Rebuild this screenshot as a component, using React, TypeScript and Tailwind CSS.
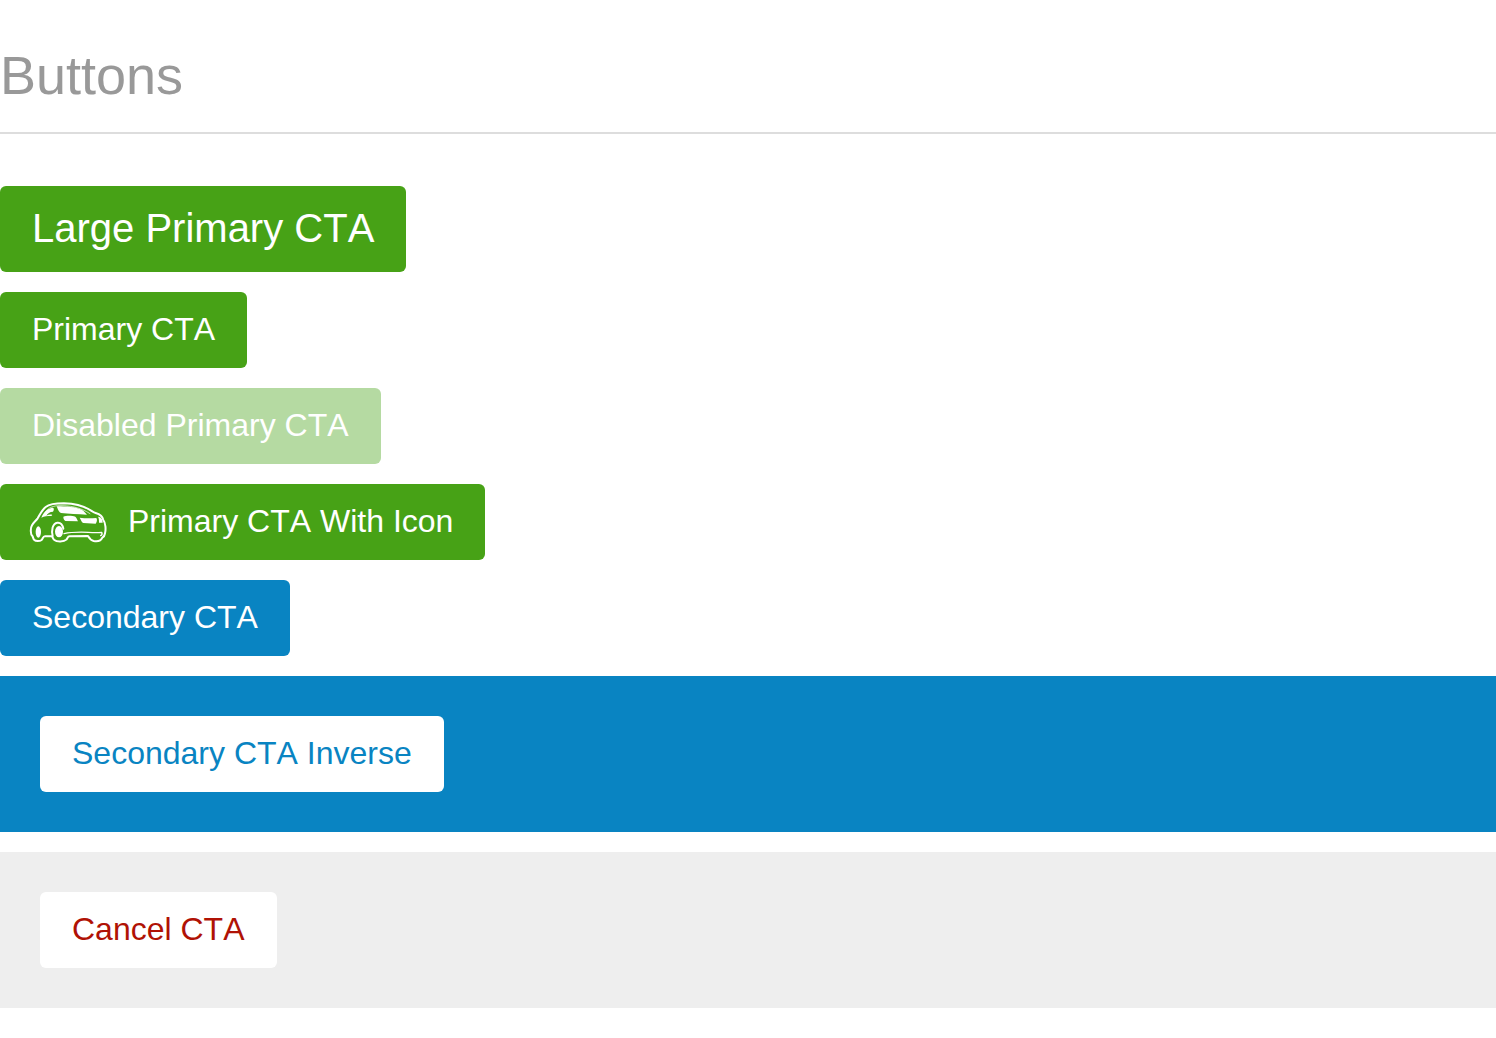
import type { ButtonHTMLAttributes } from "react";

const base =
  "inline-flex items-center rounded-md pt-[18px] pb-5 text-[32px] leading-[38px] whitespace-nowrap";

const variants = {
  primary: "bg-[#47a216] text-white disabled:bg-[#b5daa2]",
  secondary: "bg-[#0984c2] text-white",
  inverse: "bg-white text-[#0984c2]",
  cancel: "bg-white text-[#b01205]",
};

type CtaProps = ButtonHTMLAttributes<HTMLButtonElement> & {
  variant: keyof typeof variants;
};

function Cta({ variant, className = "px-8", ...rest }: CtaProps) {
  return (
    <button type="button" className={`${base} ${variants[variant]} ${className}`} {...rest} />
  );
}

function CarIcon() {
  return (
    <svg viewBox="24 30 240 132" className="-mt-0.5 -mb-1 h-11 w-20 shrink-0" fill="none" aria-hidden="true">
      <g stroke="#fff" strokeLinejoin="round" strokeLinecap="round">
        <path
          strokeWidth="6"
          d="M37 138C31 133 31 114 36 106C40 98 48 92 53 85C60 72 67 59 77 51C88 42 112 40 132 40C162 41 188 47 207 58C215 62 220 67 227 69C240 73 248 79 250 90C257 99 258 119 255 130C254 138 251 141 247 143C243 153 233 155 221 153C211 151 208 145 204 138L149 139C143 139 143 144 139 149C132 156 110 156 103 150C98 147 99 141 95 139L75 139C69 139 69 145 65 150C59 154 47 154 43 150C38 146 40 141 37 138Z"
        />
        <path strokeWidth="6" d="M98 138C94 122 97 100 112 98C122 97 128 105 130 116" />
        <path strokeWidth="4" d="M132 131C150 127 180 126 205 127C220 128 235 128 245 127C247 131 246 135 242 137" />
        <path strokeWidth="2" d="M76 66C84 54 96 49 113 47C148 46 182 52 210 71" />
      </g>
      <g fill="#fff">
        <ellipse cx="55" cy="126" rx="8" ry="17" />
        <ellipse cx="117" cy="125" rx="12" ry="17" />
        <path d="M64 83C70 68 80 56 98 53C103 54 102 60 99 65C90 65 82 70 79 77C85 74 92 72 97 75L94 78C82 78 73 79 64 83Z" />
        <path d="M110 49C140 49 167 51 185 59C192 63 197 69 201 74C175 72 145 72 123 69C116 66 113 57 110 49Z" />
        <path d="M130 80C140 76 157 77 166 80C170 84 172 89 174 94L136 93C131 89 130 84 130 80Z" />
        <path d="M179 83C194 85 211 85 229 84C233 89 230 97 227 101L190 99C184 97 183 88 179 83Z" />
        <path d="M234 80C244 81 248 88 248 98L237 98C237 90 237 85 234 80Z" />
      </g>
    </svg>
  );
}

export default function App() {
  return (
    <main className="bg-white pt-11 pb-[30px] font-['Liberation_Sans',Arial,sans-serif] [font-kerning:none]">
      <h1 className="mb-[52px] border-b-2 border-[#ddd] pb-[26px] text-[54px] leading-[62px] text-[#999]">
        Buttons
      </h1>
      <div className="flex flex-col items-start gap-5">
        <button
          type="button"
          className="rounded-md bg-[#47a216] px-8 pt-5 pb-[22px] text-[40px] leading-[44px] whitespace-nowrap text-white"
        >
          Large Primary CTA
        </button>
        <Cta variant="primary">Primary CTA</Cta>
        <Cta variant="primary" disabled>
          Disabled Primary CTA
        </Cta>
        <Cta variant="primary" className="gap-5 pr-8 pl-7">
          <CarIcon />
          <span>Primary CTA With Icon</span>
        </Cta>
        <Cta variant="secondary">Secondary CTA</Cta>
        <div className="flex w-full bg-[#0984c2] p-10">
          <Cta variant="inverse">Secondary CTA Inverse</Cta>
        </div>
        <div className="flex w-full bg-[#eee] p-10">
          <Cta variant="cancel">Cancel CTA</Cta>
        </div>
      </div>
    </main>
  );
}
